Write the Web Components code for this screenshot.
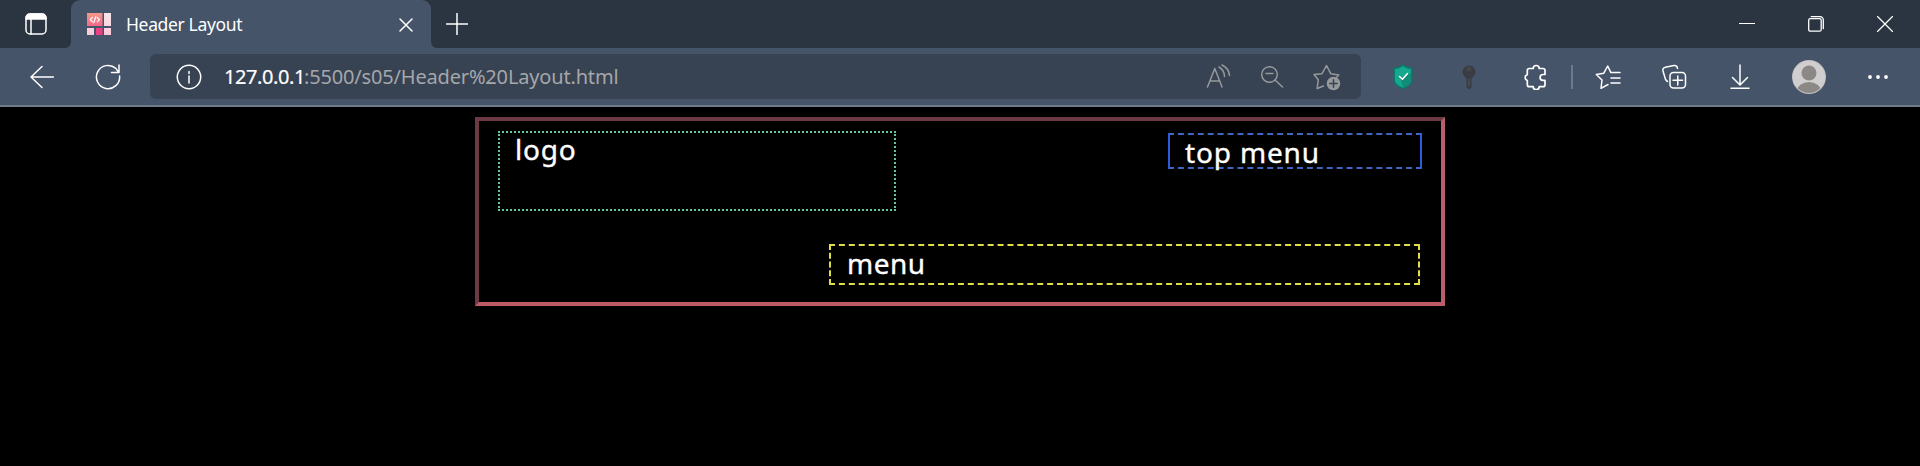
<!DOCTYPE html>
<html lang="en"><head><meta charset="utf-8"><title>Header Layout</title>
<style>html,body{margin:0;height:100%;background:#000;overflow:hidden;font-family:"Noto Sans","Liberation Sans",sans-serif;color:#fff}</style>
</head><body><browser-window></browser-window>
<script>
const define=(name,css,html)=>customElements.define(name,class extends HTMLElement{
  constructor(){super();this.attachShadow({mode:'open'}).innerHTML=`<style>*{box-sizing:border-box}${css}</style>${html}`;}
});

const icons={
  workspace:[22,22,'<rect x="1" y="1" width="20" height="20" rx="4"/><path d="M1 6V5a4 4 0 0 1 4-4h12a4 4 0 0 1 4 4v1z" fill="currentColor"/><path d="M6 6v15"/>'],
  favicon:[24,22,'<defs><linearGradient id="a" x2="0" y2="1"><stop stop-color="#f39a87"/><stop offset="1" stop-color="#f4688a"/></linearGradient><linearGradient id="b" x2="0" y2="1"><stop stop-color="#f8e6ea"/><stop offset="1" stop-color="#fbc9d8"/></linearGradient></defs><g stroke="none"><path fill="url(#a)" d="M0 0h15.5v13H0z"/><path fill="url(#b)" d="M17 0h7v13h-7zM0 15h7v7H0zM17 15h7v7h-7z"/><path fill="#ee3f83" d="M9 15h6.5v7H9z"/></g><path stroke="#fff" stroke-width="1.2" d="M5.4 4.500 3.200 6.700l2.200 2.200M10.200 4.500l2.200 2.200-2.200 2.200M8.700 3.800 6.900 9.600"/>'],
  tabclose:[14,14,'<path d="m1 1 12 12M13 1 1 13"/>'],
  plus:[22,22,'<path d="M11 .5v21M.5 11h21"/>'],
  minimize:[16,16,'<path d="M.5 7.500h15" stroke-width="1.200"/>'],
  restore:[16,16,'<rect x=".7" y="2.700" width="12.500" height="12.500" rx="1.500" stroke-width="1.300"/><path stroke-width="1.300" d="M3.200.7h9A3.100 3.100 0 0 1 15.300 3.800v8.900"/>'],
  close:[16,16,'<path d="m.5.5 15 15M15.500.5l-15 15" stroke-width="1.300"/>'],
  back:[24,24,'<path d="M23.500 12H1M12 1.500 1 12l11 10.500"/>'],
  reload:[26,26,'<path d="M24.600 12A11.600 11.600 0 1 1 20.800 4.400L23.500 8M24 1v7.600h-7.500"/>'],
  info:[26,26,'<circle cx="13" cy="13" r="11.700"/><path d="M13 12v7M13 7.500v2"/>'],
  read:[26,26,'<path d="M2.500 23 9.800 4.500 17 23M5 17h9.500M14 3a11 11 0 0 1 5.500 9.500M17 1a13 13 0 0 1 7.500 10.500"/>'],
  zoomout:[24,24,'<circle cx="9.500" cy="9.500" r="7.800"/><path d="m15 15 7.500 7M6 8.500h7"/>'],
  staradd:[28,28,'<path d="m10.500 23-6.400 2.500 1.200-8.700L1 11.500l8-.8 4.500-8.200 4.200 8.200 8.100 1.200-2.600 2.800"/><circle cx="20.500" cy="20.500" r="6.800" fill="currentColor" stroke="none"/><path stroke="#374253" d="M20.500 16.800v7.400M16.800 20.500h7.400"/>'],
  shield:[20,26,'<g stroke="none"><path fill="#08796a" d="M10 0c3 3 6 3 9.500 3.500v12.500c0 5-5 7-9.500 9.500C5.500 23 .5 21 .5 16V3.500C4 3 7 3 10 0z"/><path fill="#16a88d" d="M10 2c2.700 2.200 5 2.600 8 3v11c0 4-4 5.500-8 7.800C6 21.500 2 20 2 16V5c3-.4 5.300-.8 8-3z"/><path fill="#128c78" d="M18 9v7c0 4-4 5.500-8 7.800L7.500 14.500z"/></g><path stroke="#fff" d="m6.500 12.500 3 2.700 5-5.700"/>'],
  key:[16,26,'<g stroke="none" fill="#393d43"><circle cx="8" cy="8" r="6.500"/><path d="M5.500 13h5v10.500L8 25.500l-2.500-2z"/><circle cx="8" cy="5" r="2.500" fill="#444649"/><path fill="#50555c" d="M7.400 14.500h1.200v8H7.400z"/></g>'],
  puzzle:[26,26,'<path stroke-width="1.700" d="M10.200 4.500a3 3 0 0 1 6 0h3.800a2 2 0 0 1 2 2v4h-2a2.900 2.900 0 0 0 0 5.800h2v4.400a2 2 0 0 1-2 2h-3.800a3 3 0 0 1-6 0H6.300a2 2 0 0 1-2-2v-4.200a3.100 3.100 0 0 1 0-5.900V6.500a2 2 0 0 1 2-2z"/>'],
  favorites:[26,26,'<path d="m13 20.500-7 3.800 1-8.300-5.700-5.500 7.500-1.300L12.700 2l3.200 6.600H25M16 14h9M16 19h9"/>'],
  collections:[26,26,'<path d="M6.500 17.500C4.500 16.500 4 15 3.500 12L2 7c-.6-2 .4-3.300 2.300-3.800L13 1.500c2-.4 3.400 1 3.500 3"/><rect x="9" y="8.500" width="15.500" height="15.500" rx="3.500"/><path d="M16.750 12v9M12 16.300h9.500"/>'],
  download:[20,26,'<path d="M10 1v19M2.500 13.500l7.500 7.500 7.500-7.500M1 24.200h18"/>'],
  avatar:[34,34,'<defs><clipPath id="c"><circle cx="17" cy="17" r="16"/></clipPath></defs><g stroke="none"><circle cx="17" cy="17" r="17" fill="#c3c2c2"/><circle cx="17" cy="17" r="16" fill="#d0cece"/><g clip-path="url(#c)" fill="#8b8886"><circle cx="17" cy="13" r="7.500"/><ellipse cx="17" cy="31" rx="12" ry="9"/></g></g>'],
  more:[22,6,'<g fill="currentColor" stroke="none"><circle cx="3" cy="3" r="1.900"/><circle cx="11" cy="3" r="1.900"/><circle cx="19" cy="3" r="1.900"/></g>']
};
customElements.define('ui-icon',class extends HTMLElement{
  constructor(){super();this.attachShadow({mode:'open'});}
  connectedCallback(){
    const [w,h,body]=icons[this.getAttribute('name')];
    this.shadowRoot.innerHTML=`<style>:host{display:flex;flex:none;align-items:center;justify-content:center}svg{display:block}</style><svg width="${w}" height="${h}" viewBox="0 0 ${w} ${h}" fill="none" stroke="currentColor" stroke-width="1.5" stroke-linecap="round" stroke-linejoin="round">${body}</svg>`;
  }
});

define('tab-strip',`
:host{display:flex;height:48px;background:#455468}
.left{width:71px;background:#2b3441;border-radius:0 0 6px 0;display:flex;justify-content:center;align-items:center}
.tab{width:360px;background:linear-gradient(#2b3441 12px,#455468 12px)}
.in{height:48px;background:#455468;border-radius:9px 9px 0 0;display:flex;align-items:center;padding:0 18px 0 16px}
.t{font-size:17.500px;line-height:24px;margin-left:15px;flex:1;white-space:nowrap;letter-spacing:-.35px}
.x{padding-top:2px}
.right{flex:1;background:#2b3441;border-radius:0 0 0 6px;display:flex;align-items:center;padding:0 27px 0 15px}
.win{margin-left:auto;display:flex;gap:53px}`,
`<div class="left"><ui-icon name="workspace"></ui-icon></div>
<div class="tab"><div class="in"><ui-icon name="favicon"></ui-icon><span class="t"><slot></slot></span><ui-icon class="x" name="tabclose"></ui-icon></div></div>
<div class="right"><ui-icon name="plus"></ui-icon><div class="win"><ui-icon name="minimize"></ui-icon><ui-icon name="restore"></ui-icon><ui-icon name="close"></ui-icon></div></div>`);

define('address-bar',`
:host{display:flex;align-items:center;width:1211px;height:45px;border-radius:6px;background:#374253;padding:0 20px 0 26px;margin:0 9px}
.u{font-size:20px;line-height:28px;margin-left:22px;flex:1;display:flex;white-space:nowrap}
.h{letter-spacing:-.4px;width:80px;-webkit-text-stroke:.2px #fff}.p{color:#a5a7a9;letter-spacing:-.17px}
.a{display:flex;gap:29px;align-items:center;color:#96999c}`,
`<ui-icon name="info"></ui-icon><span class="u"><span class="h"><slot name="host"></slot></span><span class="p"><slot></slot></span></span><span class="a"><ui-icon name="read"></ui-icon><ui-icon name="zoomout"></ui-icon><ui-icon name="staradd"></ui-icon></span>`);

define('tool-bar',`
:host{display:flex;align-items:center;height:59px;background:#455468;border-bottom:2px solid #707b88;padding:0 9px 0 9px}
ui-icon{width:66px}
.d{width:2px;height:24px;background:#6e7a89;margin:0 2px}
.g{margin-left:1px}
.m{margin-left:3px}`,
`<ui-icon name="back"></ui-icon><ui-icon name="reload"></ui-icon><slot></slot><ui-icon name="shield"></ui-icon><ui-icon name="key"></ui-icon><ui-icon class="g" name="puzzle"></ui-icon><span class="d"></span><ui-icon name="favorites"></ui-icon><ui-icon name="collections"></ui-icon><ui-icon name="download"></ui-icon><ui-icon class="m" name="avatar"></ui-icon><ui-icon class="m" name="more"></ui-icon>`);

define('layout-box',`:host{display:block;box-sizing:border-box;font-size:28px;line-height:32px;white-space:nowrap;-webkit-text-stroke:.35px #fff}`,`<slot></slot>`);

define('page-header',`
:host{display:grid;box-sizing:border-box;width:970px;height:189px;margin:10px auto 0;border:4px solid;border-color:#6d3a43 #b95f6c #be5b69 #6d3a43;padding:10px 19px 17px 19px;grid-template-columns:398px 1fr;grid-template-rows:80px 1fr}
.logo{border:2px dotted #63c79e;padding:0 0 0 15px;letter-spacing:.8px}
.top{width:254px;height:36px;justify-self:end;margin-top:2px;border:2px solid #2d5bdd;border-top:2px dashed #3f66c0;border-bottom:2px dashed #3f66c0;padding:1px 0 0 15px;letter-spacing:.85px}
.menu{grid-column:1/3;width:591px;height:41px;justify-self:end;align-self:end;margin-right:2px;border:2px dashed #dfde48;padding:1px 0 0 16px;letter-spacing:.5px}`,
`<layout-box class="logo">logo</layout-box><layout-box class="top">top menu</layout-box><layout-box class="menu">menu</layout-box>`);

define('browser-window',`:host{display:block;width:1920px;height:466px;background:#000}`,
`<tab-strip>Header Layout</tab-strip><tool-bar><address-bar><span slot="host">127.0.0.1</span>:5500/s05/Header%20Layout.html</address-bar></tool-bar><page-header></page-header>`);
</script></body></html>
